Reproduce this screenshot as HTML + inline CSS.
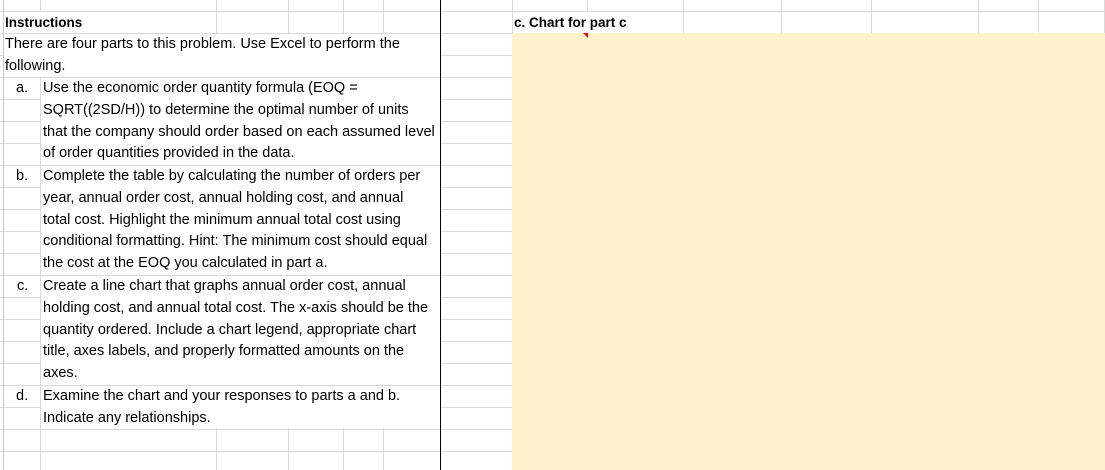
<!DOCTYPE html>
<html><head><meta charset="utf-8"><style>
body{margin:0;width:1105px;height:470px;position:relative;overflow:hidden;background:#fff;font-family:"Liberation Sans",sans-serif;color:#000}
.h{position:absolute;height:1px;background:#dadada}
.v{position:absolute;width:1px;background:#dadada}
.t{position:absolute;font-size:14.5px;white-space:nowrap;line-height:21.8px}
.blk{position:absolute;background:#fff}
</style></head><body>
<div id="g"></div>
<script>
var g=document.getElementById('g'),s='';
var rows=[11,33,55,77,99,121,143,165,187,209,231,253,275,297,319,341,363,385,407,429,451];
rows.forEach(function(y){s+='<div class="h" style="left:0;width:1105px;top:'+y+'px"></div>';});
[40,216,288,343,383,512,587,683,781,871,978,1038,1104].forEach(function(x){s+='<div class="v" style="left:'+x+'px;top:0;height:470px"></div>';});
g.innerHTML=s;
</script>
<div class="v" style="left:3px;top:0;height:470px;background:#c8c8c8"></div>
<div class="blk" style="left:4px;top:34px;width:436px;height:43px"></div>
<div class="blk" style="left:41px;top:78px;width:399px;height:87px"></div>
<div class="blk" style="left:41px;top:166px;width:399px;height:109px"></div>
<div class="blk" style="left:41px;top:276px;width:399px;height:109px"></div>
<div class="blk" style="left:41px;top:386px;width:399px;height:42px"></div>
<div class="blk" style="left:4px;top:12px;width:212px;height:21px"></div>
<div style="position:absolute;left:512px;top:33px;width:593px;height:437px;background:#fff2cc"></div>
<div style="position:absolute;left:513px;top:12px;width:170px;height:21px;background:#fff"></div>
<div style="position:absolute;left:583px;top:33px;width:0;height:0;border-left:5px solid transparent;border-top:5px solid #f00"></div>
<div style="position:absolute;left:440px;top:0;width:1px;height:470px;background:#000"></div>
<div class="t" style="left:5px;top:12px;font-weight:bold;font-size:13.5px">Instructions</div>
<div class="t" style="left:5px;top:34px">There are four parts to this problem. Use Excel to perform the<br>following.</div>
<div class="t" style="left:16px;top:78px">a.</div>
<div class="t" style="left:43px;top:78px">Use the economic order quantity formula (EOQ =<br>SQRT((2SD/H)) to determine the optimal number of units<br>that the company should order based on each assumed level<br>of order quantities provided in the data.</div>
<div class="t" style="left:16px;top:166px">b.</div>
<div class="t" style="left:43px;top:166px">Complete the table by calculating the number of orders per<br>year, annual order cost, annual holding cost, and annual<br>total cost. Highlight the minimum annual total cost using<br>conditional formatting. Hint: The minimum cost should equal<br>the cost at the EOQ you calculated in part a.</div>
<div class="t" style="left:17px;top:276px">c.</div>
<div class="t" style="left:43px;top:276px">Create a line chart that graphs annual order cost, annual<br>holding cost, and annual total cost. The x-axis should be the<br>quantity ordered. Include a chart legend, appropriate chart<br>title, axes labels, and properly formatted amounts on the<br>axes.</div>
<div class="t" style="left:16px;top:386px">d.</div>
<div class="t" style="left:43px;top:386px">Examine the chart and your responses to parts a and b.<br>Indicate any relationships.</div>
<div class="t" style="left:514px;top:12px;font-weight:bold;font-size:13.5px">c. Chart for part c</div>
</body></html>
